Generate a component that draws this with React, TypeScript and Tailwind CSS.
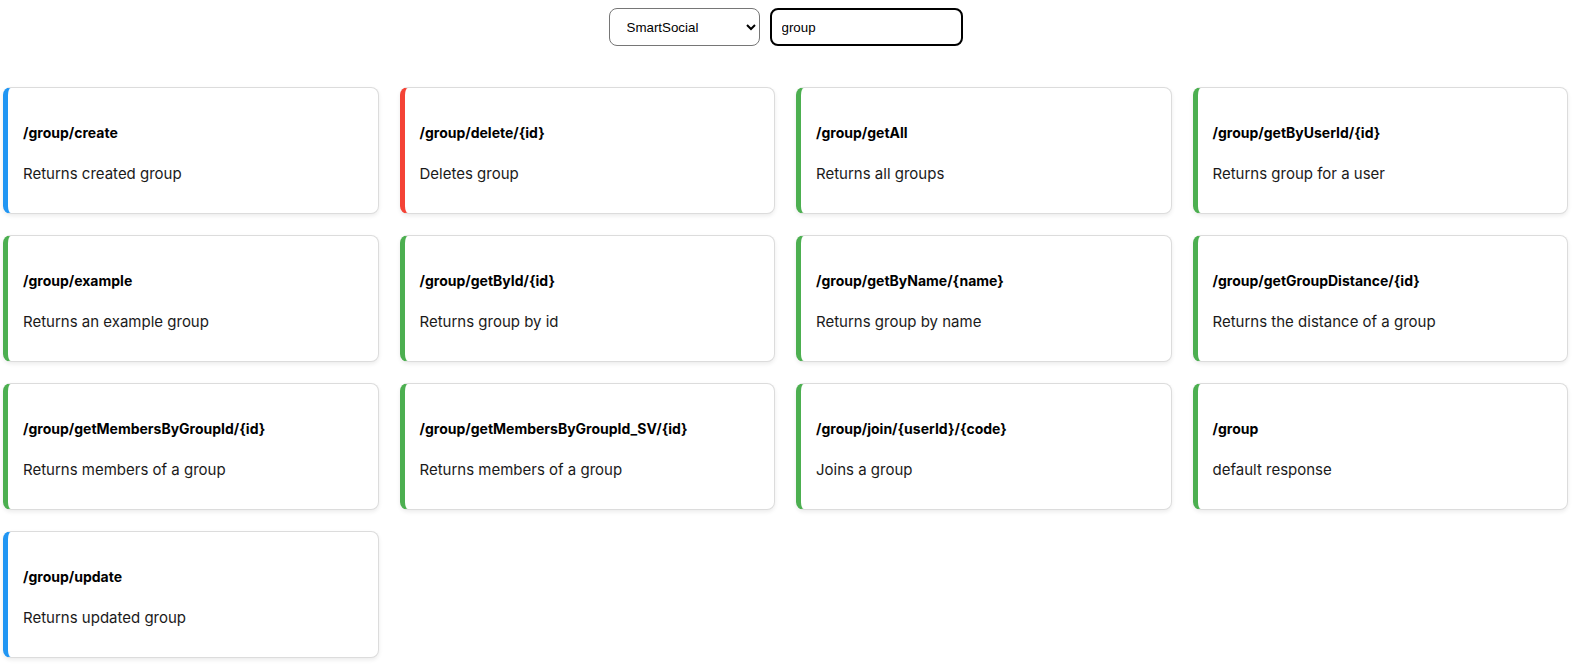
import { useState } from 'react';

type Endpoint = {
  path: string;
  desc: string;
  method: 'post' | 'delete' | 'get';
};

const endpoints: Endpoint[] = [
  { path: '/group/create', desc: 'Returns created group', method: 'post' },
  { path: '/group/delete/{id}', desc: 'Deletes group', method: 'delete' },
  { path: '/group/getAll', desc: 'Returns all groups', method: 'get' },
  { path: '/group/getByUserId/{id}', desc: 'Returns group for a user', method: 'get' },
  { path: '/group/example', desc: 'Returns an example group', method: 'get' },
  { path: '/group/getById/{id}', desc: 'Returns group by id', method: 'get' },
  { path: '/group/getByName/{name}', desc: 'Returns group by name', method: 'get' },
  { path: '/group/getGroupDistance/{id}', desc: 'Returns the distance of a group', method: 'get' },
  { path: '/group/getMembersByGroupId/{id}', desc: 'Returns members of a group', method: 'get' },
  { path: '/group/getMembersByGroupId_SV/{id}', desc: 'Returns members of a group', method: 'get' },
  { path: '/group/join/{userId}/{code}', desc: 'Joins a group', method: 'get' },
  { path: '/group', desc: 'default response', method: 'get' },
  { path: '/group/update', desc: 'Returns updated group', method: 'post' },
];

function EndpointCard({ ep }: { ep: Endpoint }) {
  // left stripe colour by method
  const stripe =
    ep.method === 'delete'
      ? 'border-l-[#f44336]'
      : ep.method === 'post'
      ? 'border-l-[#2196f3]'
      : 'border-l-[#4caf50]';

  return (
    <div
      className={`h-[127px] bg-white rounded-lg border border-[#dcdcdc] border-l-[5px] ${stripe} shadow-[0_2px_4px_rgba(0,0,0,0.08)] pl-[15px] pr-4 pt-[35px]`}
    >
      <h3 className="text-[14px] leading-5 font-bold text-black">{ep.path}</h3>
      <p className="mt-[21px] text-[15px] leading-5 text-[#1a1a1a]">{ep.desc}</p>
    </div>
  );
}

export default function App() {
  const [project, setProject] = useState('SmartSocial');
  const [query, setQuery] = useState('group');

  const shown = endpoints.filter((e) => e.path.toLowerCase().includes(query.toLowerCase()));

  return (
    <div className="min-h-screen bg-white font-['Inter',sans-serif]">
      {/* Top controls */}
      <div className="flex justify-center items-center gap-[10px] pt-2 pr-[5px]">
        <select
          value={project}
          onChange={(e) => setProject(e.target.value)}
          className="w-[151px] h-[38px] rounded-lg border border-[#767676] bg-white pl-[13px] pr-2 text-[13.33px] font-['Liberation_Sans',Arial,sans-serif] text-black"
        >
          <option>SmartSocial</option>
          <option>SmartHome</option>
        </select>
        <input
          value={query}
          onChange={(e) => setQuery(e.target.value)}
          className="w-[193px] h-[38px] rounded-lg border-2 border-black px-[10px] text-[13.33px] font-['Liberation_Sans',Arial,sans-serif] text-black outline-none"
        />
      </div>

      {/* Endpoint grid */}
      <div className="grid grid-cols-4 gap-x-[21px] gap-y-[21px] pl-[3px] pr-[8px] mt-[41px] pb-2">
        {shown.map((ep) => (
          <EndpointCard key={ep.path} ep={ep} />
        ))}
      </div>
    </div>
  );
}
